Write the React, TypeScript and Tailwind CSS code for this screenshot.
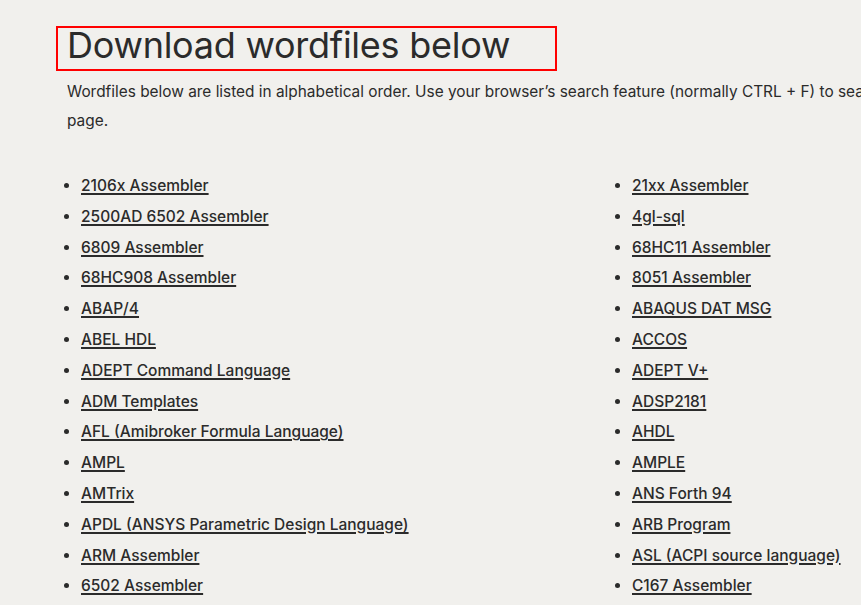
const wordfiles = [
  "2106x Assembler",
  "21xx Assembler",
  "2500AD 6502 Assembler",
  "4gl-sql",
  "6809 Assembler",
  "68HC11 Assembler",
  "68HC908 Assembler",
  "8051 Assembler",
  "ABAP/4",
  "ABAQUS DAT MSG",
  "ABEL HDL",
  "ACCOS",
  "ADEPT Command Language",
  "ADEPT V+",
  "ADM Templates",
  "ADSP2181",
  "AFL (Amibroker Formula Language)",
  "AHDL",
  "AMPL",
  "AMPLE",
  "AMTrix",
  "ANS Forth 94",
  "APDL (ANSYS Parametric Design Language)",
  "ARB Program",
  "ARM Assembler",
  "ASL (ACPI source language)",
  "6502 Assembler",
  "C167 Assembler",
  "ASM6502",
  "Atmel AVR Assembler",
];

export default function App() {
  return (
    <div className="h-[605px] w-[861px] overflow-hidden bg-[#f1f0ed] text-[#2b2b2b] font-['Inter',sans-serif]">
      <div className="w-[1160px] pl-[56px] pt-[26px]">
        {/* Heading with highlight frame */}
        <div className="w-[501px] h-[45px] border-2 border-[#ff0000] pl-[9px]">
          <h1 className="text-[36px] leading-[34px] font-normal tracking-[-0.25px]">Download wordfiles below</h1>
        </div>

        <p className="ml-[11px] mt-[6px] w-[1060px] text-[15.4px] leading-[29px]">
          Wordfiles below are listed in alphabetical order. Use your browser’s search feature (normally CTRL + F) to search for a specific language on this
          page.
        </p>

        <ul className="mt-[36px] ml-[25px] grid grid-cols-[551px_551px] list-disc pl-0">
          {wordfiles.map((name) => (
            <li key={name} className="h-[30.8px] text-[15.5px] leading-[30.8px] font-medium marker:text-[#2b2b2b]">
              <a href="#" className="underline underline-offset-[2px] decoration-[1.5px]">
                {name}
              </a>
            </li>
          ))}
        </ul>
      </div>
    </div>
  );
}
